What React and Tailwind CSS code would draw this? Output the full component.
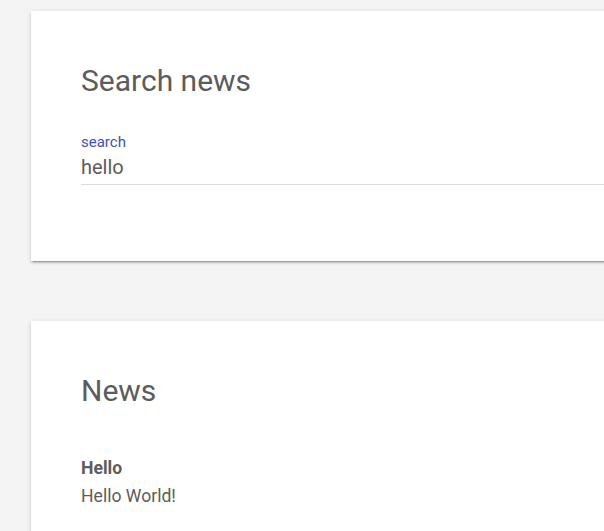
export default function App() {
  return (
    <div className="min-h-screen w-screen overflow-hidden bg-[#f4f4f4] pt-[11px] pl-[31px] font-['Roboto',sans-serif] text-[#5c5c5c]">
      <section className="w-[800px] bg-white px-[50px] pt-[52px] pb-[76px] shadow-[0_2px_2px_0_rgba(0,0,0,0.14),0_3px_1px_-2px_rgba(0,0,0,0.2),0_1px_5px_0_rgba(0,0,0,0.12)]">
        <h2 className="text-[30px] leading-[36px] font-normal">Search news</h2>
        <label className="mt-[34px] block border-b border-[#dddddd] pb-[5px]">
          <span className="block text-[15px] leading-[18px] text-[#3f51b5]">search</span>
          <input
            className="mt-[4px] block w-full bg-transparent text-[20px] leading-[24px] text-[#5c5c5c] outline-none"
            defaultValue="hello"
          />
        </label>
      </section>

      <section className="mt-[60px] w-[800px] bg-white px-[50px] pt-[52px] pb-[60px] shadow-[0_2px_2px_0_rgba(0,0,0,0.14),0_3px_1px_-2px_rgba(0,0,0,0.2),0_1px_5px_0_rgba(0,0,0,0.12)]">
        <h2 className="text-[30px] leading-[36px] font-normal">News</h2>
        <div className="mt-[46px] text-[17.6px] leading-[27px]">
          <div className="font-bold">Hello</div>
          <div className="mt-px">Hello World!</div>
        </div>
      </section>
    </div>
  );
}
